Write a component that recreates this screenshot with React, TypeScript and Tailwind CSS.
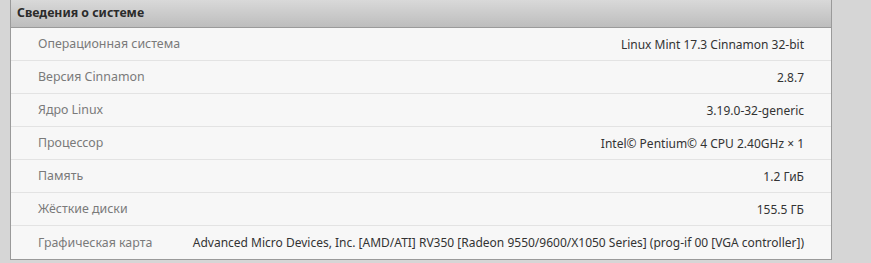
import React from "react";

const rows: [string, string][] = [
  ["Операционная система", "Linux Mint 17.3 Cinnamon 32-bit"],
  ["Версия Cinnamon", "2.8.7"],
  ["Ядро Linux", "3.19.0-32-generic"],
  ["Процессор", "Intel© Pentium© 4 CPU 2.40GHz × 1"],
  ["Память", "1.2 ГиБ"],
  ["Жёсткие диски", "155.5 ГБ"],
  ["Графическая карта", "Advanced Micro Devices, Inc. [AMD/ATI] RV350 [Radeon 9550/9600/X1050 Series] (prog-if 00 [VGA controller])"],
];

export default function App() {
  return (
    <div
      className="w-[871px] h-[263px] bg-[#d6d6d6] overflow-hidden pl-[10px]"
      style={{ fontFamily: '"Noto Sans", "Open Sans", sans-serif' }}
    >
      <div className="w-[822px] border-x border-b border-[#9a9a9a] bg-[#f7f7f7]">
        <div className="h-[28px] border-b border-[#9a9a9a] bg-gradient-to-b from-[#d9d9d9] to-[#bdbdbd] flex items-center pl-[6px]">
          <span className="text-[12.3px] font-bold text-[#2b2b2b]">Сведения о системе</span>
        </div>
        {rows.map(([k, v], i) => (
          <div
            key={k}
            className={
              "flex items-center justify-between h-[33px] pl-[27px] pr-[27px] pt-[1px] " +
              (i < rows.length - 1 ? "border-b border-[#e3e3e3]" : "")
            }
          >
            <span className="text-[12.4px] text-[#7a7a7a] whitespace-nowrap">{k}</span>
            <span className="text-[12px] text-[#333333] whitespace-nowrap">{v}</span>
          </div>
        ))}
      </div>
    </div>
  );
}
